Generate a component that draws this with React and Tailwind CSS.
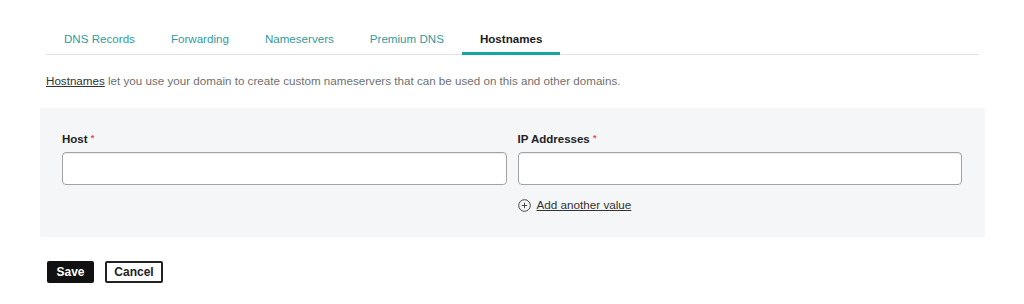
import React, { useState } from "react";

const tabs = ["DNS Records", "Forwarding", "Nameservers", "Premium DNS", "Hostnames"];

const Field = ({ label, children }) => (
  <div className="flex flex-col">
    <label className="text-[11.5px] leading-[16px] font-bold text-[#222]">
      {label} <span className="text-[#e0524f] text-[9px] align-top relative top-[-1px]">*</span>
    </label>
    <input
      type="text"
      className="mt-[5px] h-[33px] w-full rounded-[4px] border border-[#a3a3a3] bg-white px-2 text-[13px] shadow-[inset_0_1px_1px_rgba(0,0,0,0.08)] outline-none"
    />
    {children}
  </div>
);

const App = () => {
  const [active, setActive] = useState("Hostnames");

  return (
    <main
      className="min-h-screen bg-white pl-[46px] pr-[45px] pt-[24px]"
      style={{ fontFamily: '"Liberation Sans", Arial, sans-serif' }}
    >
      <nav className="flex border-b border-[#e2e2e2]">
        {tabs.map((t) => (
          <button
            key={t}
            onClick={() => setActive(t)}
            className={
              t === active
                ? "-mb-px px-[18px] pt-[7px] pb-[5px] text-[11.6px] leading-[16px] font-bold text-[#1b1b1b] border-b-[3px] border-[#17a6a1]"
                : "-mb-px px-[18px] pt-[7px] pb-[5px] text-[11.6px] leading-[16px] text-[#2f9ba1] border-b-[3px] border-transparent"
            }
          >
            {t}
          </button>
        ))}
      </nav>

      <p className="mt-[18px] text-[11.63px] leading-[16px] text-[#707070]">
        <a href="#" className="text-[#333] underline">Hostnames</a> let you use your domain to create custom nameservers that can be used on this and other domains.
      </p>

      <section className="-mx-[6px] mt-[19px] bg-[#f5f6f8] pl-[22px] pr-[23px] pt-[23px] pb-[24px]">
        <div className="grid grid-cols-2 gap-[11px]">
          <Field label="Host" />
          <Field label="IP Addresses">
            <a href="#" className="mt-[12px] flex items-center gap-[6px] text-[11.7px] leading-[16px] text-[#333]">
              <svg width="13" height="13" viewBox="0 0 13 13" fill="none" stroke="#444" strokeWidth="1">
                <circle cx="6.5" cy="6.5" r="5.8" />
                <path d="M6.5 3.8v5.4M3.8 6.5h5.4" />
              </svg>
              <span className="underline">Add another value</span>
            </a>
          </Field>
        </div>
      </section>

      <div className="mt-[24px] flex gap-[11px] pl-px">
        <button className="h-[22px] w-[47px] rounded-[2px] bg-[#111] text-[12px] font-bold text-white">Save</button>
        <button className="h-[22px] w-[58px] rounded-[2px] border-2 border-[#222] bg-white text-[12px] font-bold text-[#222]">Cancel</button>
      </div>
    </main>
  );
};

export default App;
